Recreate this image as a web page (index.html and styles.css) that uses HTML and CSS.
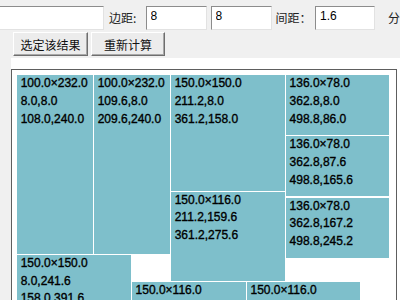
FILE: index.html
```html
<!DOCTYPE html>
<html lang="zh-CN">
<head>
<meta charset="utf-8">
<title>排样结果</title>
<link rel="stylesheet" href="styles.css">
</head>
<body>
<div class="toolbar">
  <div class="row">
    <input class="field field-name" type="text" value="">
    <span class="label label-margin">边距:</span>
    <input class="field field-num" type="text" value="8">
    <input class="field field-num field-gap" type="text" value="8">
    <span class="label label-spacing">间距：</span>
    <input class="field field-num3" type="text" value="1.6">
    <span class="label label-fen">分</span>
  </div>
  <div class="row buttons">
    <button class="btn btn-select">选定该结果</button>
    <button class="btn btn-recalc">重新计算</button>
  </div>
</div>
<div class="panel">
  <div class="canvas">
    <div class="piece" style="left:5px;top:5px;width:75.8px;height:178.6px"><div>100.0×232.0</div><div>8.0,8.0</div><div>108.0,240.0</div></div>
    <div class="piece" style="left:82px;top:5px;width:75.8px;height:178.6px"><div>100.0×232.0</div><div>109.6,8.0</div><div>209.6,240.0</div></div>
    <div class="piece" style="left:159px;top:5px;width:113.7px;height:115.5px"><div>150.0×150.0</div><div>211.2,8.0</div><div>361.2,158.0</div></div>
    <div class="piece" style="left:273.9px;top:5px;width:103.1px;height:60.1px"><div>136.0×78.0</div><div>362.8,8.0</div><div>498.8,86.0</div></div>
    <div class="piece" style="left:273.9px;top:66.3px;width:103.1px;height:60.1px"><div>136.0×78.0</div><div>362.8,87.6</div><div>498.8,165.6</div></div>
    <div class="piece" style="left:159px;top:121.7px;width:113.7px;height:89.3px"><div>150.0×116.0</div><div>211.2,159.6</div><div>361.2,275.6</div></div>
    <div class="piece" style="left:273.9px;top:127.6px;width:103.1px;height:60.1px"><div>136.0×78.0</div><div>362.8,167.2</div><div>498.8,245.2</div></div>
    <div class="piece" style="left:5px;top:184.9px;width:113.7px;height:115.5px"><div>150.0×150.0</div><div>8.0,241.6</div><div>158.0,391.6</div></div>
    <div class="piece" style="left:119.9px;top:212.3px;width:113.7px;height:89.3px"><div>150.0×116.0</div><div>159.6,277.2</div><div>309.6,393.2</div></div>
    <div class="piece" style="left:234.8px;top:212.3px;width:113.7px;height:89.3px"><div>150.0×116.0</div><div>311.2,277.2</div><div>461.2,393.2</div></div>
  </div>
</div>
</body>
</html>
```
FILE: styles.css
```css
html, body {
  margin: 0;
  padding: 0;
}
body {
  width: 400px;
  height: 300px;
  overflow: hidden;
  background: #f0f0f0;
  font-family: "Liberation Sans", "Noto Sans CJK SC", sans-serif;
  font-size: 12px;
  color: #111;
}
.toolbar {
  height: 58px;
  display: flex;
  flex-direction: column;
}
.row {
  display: flex;
  align-items: center;
}
.row:first-child {
  margin-top: 6px;
  height: 24px;
}
.field {
  box-sizing: border-box;
  height: 24px;
  margin: 0;
  padding: 0 4px 4px 4px;
  background: #fff;
  border: 1px solid;
  border-color: #8c8c8c #e2e2e2 #e2e2e2 #8c8c8c;
  font-family: "Liberation Sans", sans-serif;
  font-size: 12px;
  color: #000;
  outline: none;
}
.field-name {
  width: 110px;
  margin-left: -6px;
}
.field-num {
  width: 61px;
}
.field-gap {
  margin-left: 4px;
}
.field-num3 {
  width: 60px;
}
.label {
  font-family: "Noto Sans CJK SC", sans-serif;
  font-size: 12px;
  color: #222;
  white-space: nowrap;
  padding-bottom: 1px;
}
.label-margin {
  margin-left: 5px;
  width: 38px;
}
.label-spacing {
  margin-left: 4px;
  width: 41px;
}
.label-fen {
  margin-left: 13px;
}
.buttons {
  margin-top: 2px;
  padding-left: 13px;
  gap: 3px;
}
.btn {
  box-sizing: border-box;
  height: 24px;
  margin: 0;
  padding: 0;
  background: #ececec;
  border: 1px solid;
  border-color: #ffffff #6e6e6e #6e6e6e #ffffff;
  box-shadow: inset -1px -1px 0 #a8a8a8;
  font-family: "Noto Sans CJK SC", sans-serif;
  font-size: 12px;
  color: #111;
}
.btn-select {
  width: 75px;
}
.btn-recalc {
  width: 74px;
}
.panel {
  margin-left: 11px;
  height: 242px;
  background: #fff;
  padding-top: 11px;
  box-sizing: border-box;
}
.canvas {
  position: relative;
  box-sizing: border-box;
  width: 386px;
  height: 240px;
  border: 1px solid #5e5e5e;
  border-bottom: none;
  background: #fff;
}
.piece {
  position: absolute;
  box-sizing: border-box;
  background: #7ebfcb;
  padding: 0 0 0 3.7px;
  font-family: "Liberation Sans", sans-serif;
  font-size: 12px;
  line-height: 17.8px;
  color: #000;
  -webkit-text-stroke: 0.35px #000;
  overflow: hidden;
  white-space: nowrap;
}
```
